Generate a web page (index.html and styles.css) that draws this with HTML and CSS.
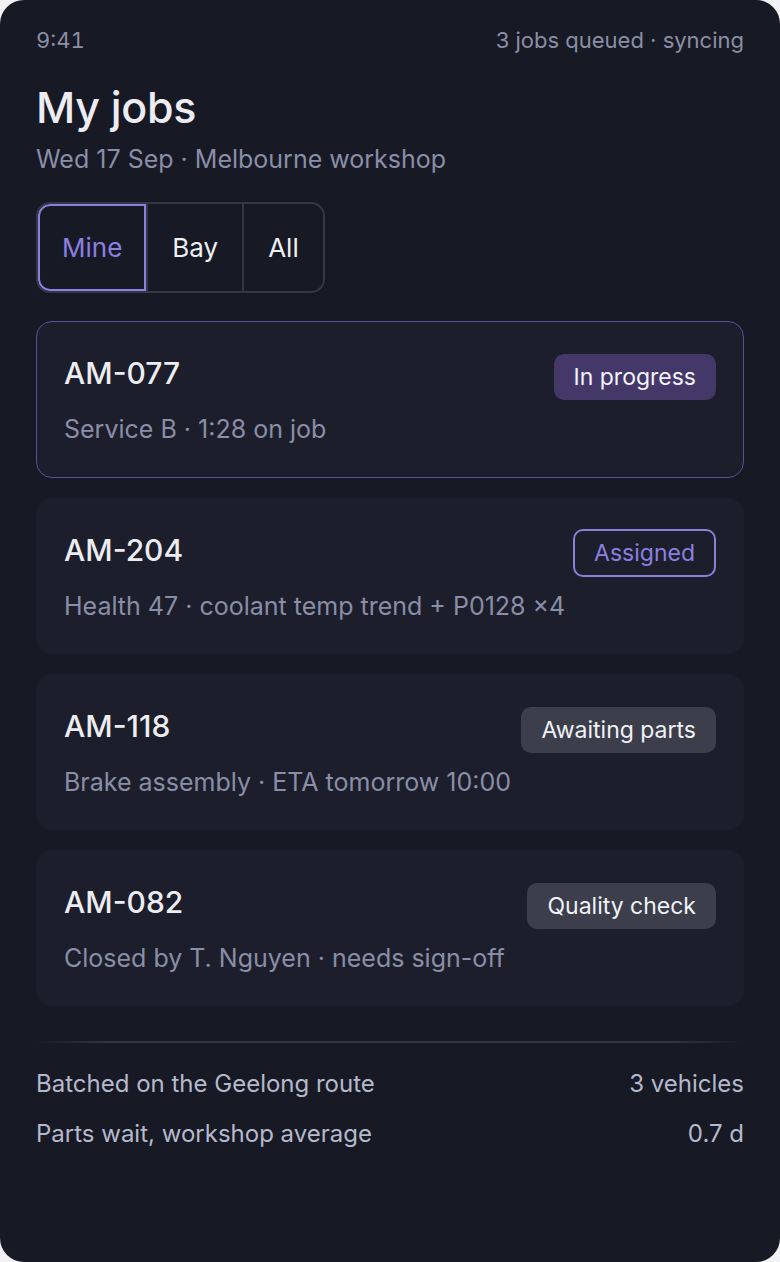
FILE: index.html
```html
<!DOCTYPE html>
<html lang="en">
<head>
  <meta charset="UTF-8" />
  <title>My jobs</title>
  <link rel="stylesheet" href="styles.css">
</head>
<body>
  <div class="ecran">
    <div class="statut">
      <span class="heure">9:41</span>
      <span>3 jobs queued · syncing</span>
    </div>

    <h1>My jobs</h1>
    <div class="sous-titre">Wed 17 Sep · Melbourne workshop</div>

    <div class="segments">
      <div class="segment actif">Mine</div>
      <div class="segment">Bay</div>
      <div class="segment">All</div>
    </div>

    <div class="jobs">
      <div class="job selection">
        <div class="ligne">
          <div class="code">AM-077</div>
          <div class="badge progres">In progress</div>
        </div>
        <div class="detail">Service B · 1:28 on job</div>
      </div>
      <div class="job">
        <div class="ligne">
          <div class="code">AM-204</div>
          <div class="badge assigne">Assigned</div>
        </div>
        <div class="detail">Health 47 · coolant temp trend + P0128 ×4</div>
      </div>
      <div class="job">
        <div class="ligne">
          <div class="code">AM-118</div>
          <div class="badge neutre">Awaiting parts</div>
        </div>
        <div class="detail">Brake assembly · ETA tomorrow 10:00</div>
      </div>
      <div class="job">
        <div class="ligne">
          <div class="code">AM-082</div>
          <div class="badge neutre">Quality check</div>
        </div>
        <div class="detail">Closed by T. Nguyen · needs sign-off</div>
      </div>
    </div>

    <div class="separateur"></div>

    <div class="resume">
      <div class="stat"><span>Batched on the Geelong route</span><span>3 vehicles</span></div>
      <div class="stat"><span>Parts wait, workshop average</span><span>0.7 d</span></div>
    </div>
  </div>
</body>
</html>
```

FILE: styles.css
```css
* { box-sizing: border-box; }
html, body {
  margin: 0; padding: 0;
  background: #f2f2f4;
  font-family: Inter, "Noto Sans", sans-serif;
}
.ecran {
  height: 1262px; padding: 22px 36px;
  background: #171925; color: #ececf1;
  border-radius: 24px; overflow: hidden;
}
.statut {
  display: flex; justify-content: space-between;
  font-size: 22px; line-height: 36px; color: #8b8fa3;
}
.heure { font-variant-numeric: tabular-nums; }
h1 {
  font-size: 43px; font-weight: 500; line-height: 48px;
  margin: 25px 0 0; letter-spacing: -0.3px;
}
.sous-titre {
  font-size: 25px; line-height: 32px; color: #8a8ea6; margin-top: 12px;
}

.segments {
  display: inline-flex; margin-top: 27px;
  border: 2px solid #353744; border-radius: 14px; overflow: hidden;
}
.segment {
  height: 87px; line-height: 87px; padding: 0 24px;
  font-size: 26px; color: #eef0f6;
  border-left: 2px solid #353744;
}
.segment:first-child { border-left: none; }
.segment.actif {
  color: #8b80e0; border: 2px solid #8b7fe0;
  border-radius: 12px 0 0 12px; line-height: 83px; padding: 0 22px;
}

.jobs {
  display: flex; flex-direction: column; gap: 20px; margin-top: 28px;
}
.job {
  background: #1c1e2b; border: 1px solid transparent;
  border-radius: 16px; padding: 30px 27px 31px;
}
.job.selection { border-color: #5b5096; padding-bottom: 32px; }
.ligne {
  display: flex; justify-content: space-between; align-items: flex-start;
}
.code { font-size: 30px; font-weight: 500; line-height: 42px; }
.badge {
  font-size: 23px; line-height: 26px; padding: 10px 20px;
  border-radius: 10px; margin-top: 2px;
}
.progres { background: #433868; color: #f4f2ff; }
.neutre { background: #3c3e4b; color: #f1f2f6; }
.assigne {
  border: 2px solid #8b7fd8; color: #8b80e0;
  padding: 9px 19px; margin-top: 0;
}
.detail {
  font-size: 25px; line-height: 32px; color: #8a8ea6; margin-top: 13px;
}

.separateur {
  height: 2px; margin-top: 35px;
  background: linear-gradient(90deg, transparent, #33353f 10%, #33353f 90%, transparent);
}
.resume { margin-top: 25px; }
.stat {
  display: flex; justify-content: space-between;
  font-size: 24px; line-height: 32px; color: #b5b9cc; margin-bottom: 18px;
}
```
